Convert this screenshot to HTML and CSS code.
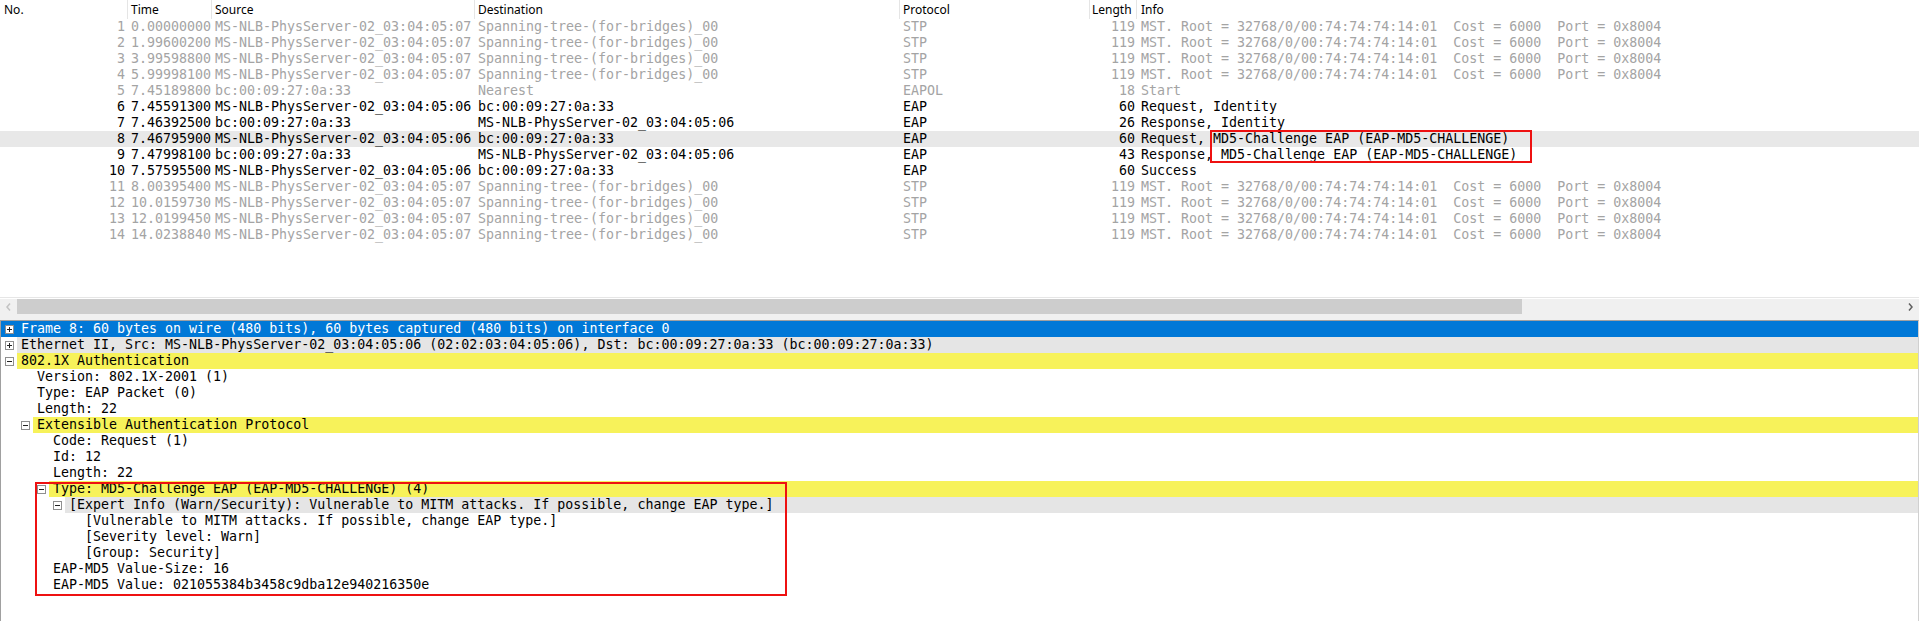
FILE: index.html
```html
<!DOCTYPE html>
<html>
<head>
<meta charset="utf-8">
<link rel="stylesheet" href="styles.css">
</head>
<body>
<div class="app">
  <div class="plist">
    <div class="cols head">
      <div class="h hno">No.</div>
      <div class="h">Time</div>
      <div class="h">Source</div>
      <div class="h">Destination</div>
      <div class="h">Protocol</div>
      <div class="h hlen">Length</div>
      <div class="h hinfo">Info</div>
    </div>
    <div class="rows">
      <div class="cols r dim"><span class="no">1</span><span class="c">0.00000000</span><span class="c">MS-NLB-PhysServer-02_03:04:05:07</span><span class="c">Spanning-tree-(for-bridges)_00</span><span class="c">STP</span><span class="len">119</span><span class="info">MST. Root = 32768/0/00:74:74:74:14:01  Cost = 6000  Port = 0x8004</span></div>
      <div class="cols r dim"><span class="no">2</span><span class="c">1.99600200</span><span class="c">MS-NLB-PhysServer-02_03:04:05:07</span><span class="c">Spanning-tree-(for-bridges)_00</span><span class="c">STP</span><span class="len">119</span><span class="info">MST. Root = 32768/0/00:74:74:74:14:01  Cost = 6000  Port = 0x8004</span></div>
      <div class="cols r dim"><span class="no">3</span><span class="c">3.99598800</span><span class="c">MS-NLB-PhysServer-02_03:04:05:07</span><span class="c">Spanning-tree-(for-bridges)_00</span><span class="c">STP</span><span class="len">119</span><span class="info">MST. Root = 32768/0/00:74:74:74:14:01  Cost = 6000  Port = 0x8004</span></div>
      <div class="cols r dim"><span class="no">4</span><span class="c">5.99998100</span><span class="c">MS-NLB-PhysServer-02_03:04:05:07</span><span class="c">Spanning-tree-(for-bridges)_00</span><span class="c">STP</span><span class="len">119</span><span class="info">MST. Root = 32768/0/00:74:74:74:14:01  Cost = 6000  Port = 0x8004</span></div>
      <div class="cols r dim"><span class="no">5</span><span class="c">7.45189800</span><span class="c">bc:00:09:27:0a:33</span><span class="c">Nearest</span><span class="c">EAPOL</span><span class="len">18</span><span class="info">Start</span></div>
      <div class="cols r"><span class="no">6</span><span class="c">7.45591300</span><span class="c">MS-NLB-PhysServer-02_03:04:05:06</span><span class="c">bc:00:09:27:0a:33</span><span class="c">EAP</span><span class="len">60</span><span class="info">Request, Identity</span></div>
      <div class="cols r"><span class="no">7</span><span class="c">7.46392500</span><span class="c">bc:00:09:27:0a:33</span><span class="c">MS-NLB-PhysServer-02_03:04:05:06</span><span class="c">EAP</span><span class="len">26</span><span class="info">Response, Identity</span></div>
      <div class="cols r sel"><span class="no">8</span><span class="c">7.46795900</span><span class="c">MS-NLB-PhysServer-02_03:04:05:06</span><span class="c">bc:00:09:27:0a:33</span><span class="c">EAP</span><span class="len">60</span><span class="info">Request, MD5-Challenge EAP (EAP-MD5-CHALLENGE)</span></div>
      <div class="cols r"><span class="no">9</span><span class="c">7.47998100</span><span class="c">bc:00:09:27:0a:33</span><span class="c">MS-NLB-PhysServer-02_03:04:05:06</span><span class="c">EAP</span><span class="len">43</span><span class="info">Response, MD5-Challenge EAP (EAP-MD5-CHALLENGE)</span></div>
      <div class="cols r"><span class="no">10</span><span class="c">7.57595500</span><span class="c">MS-NLB-PhysServer-02_03:04:05:06</span><span class="c">bc:00:09:27:0a:33</span><span class="c">EAP</span><span class="len">60</span><span class="info">Success</span></div>
      <div class="cols r dim"><span class="no">11</span><span class="c">8.00395400</span><span class="c">MS-NLB-PhysServer-02_03:04:05:07</span><span class="c">Spanning-tree-(for-bridges)_00</span><span class="c">STP</span><span class="len">119</span><span class="info">MST. Root = 32768/0/00:74:74:74:14:01  Cost = 6000  Port = 0x8004</span></div>
      <div class="cols r dim"><span class="no">12</span><span class="c">10.0159730</span><span class="c">MS-NLB-PhysServer-02_03:04:05:07</span><span class="c">Spanning-tree-(for-bridges)_00</span><span class="c">STP</span><span class="len">119</span><span class="info">MST. Root = 32768/0/00:74:74:74:14:01  Cost = 6000  Port = 0x8004</span></div>
      <div class="cols r dim"><span class="no">13</span><span class="c">12.0199450</span><span class="c">MS-NLB-PhysServer-02_03:04:05:07</span><span class="c">Spanning-tree-(for-bridges)_00</span><span class="c">STP</span><span class="len">119</span><span class="info">MST. Root = 32768/0/00:74:74:74:14:01  Cost = 6000  Port = 0x8004</span></div>
      <div class="cols r dim"><span class="no">14</span><span class="c">14.0238840</span><span class="c">MS-NLB-PhysServer-02_03:04:05:07</span><span class="c">Spanning-tree-(for-bridges)_00</span><span class="c">STP</span><span class="len">119</span><span class="info">MST. Root = 32768/0/00:74:74:74:14:01  Cost = 6000  Port = 0x8004</span></div>
    </div>
    <div class="mark mark-info"></div>
  </div>

  <div class="hscroll">
    <div class="sbtn"><svg width="5" height="8" viewBox="0 0 5 8"><path d="M4 0.5L1 4L4 7.5" fill="none" stroke="#c2c2c2" stroke-width="1.5"/></svg></div>
    <div class="track"><div class="thumb"></div></div>
    <div class="sbtn"><svg width="5" height="8" viewBox="0 0 5 8"><path d="M1 0.5L4 4L1 7.5" fill="none" stroke="#606060" stroke-width="1.5"/></svg></div>
  </div>
  <div class="splitter"></div>

  <div class="tree">
    <div class="node l0 selected"><span class="slot"><svg class="ico" width="9" height="9" viewBox="0 0 9 9"><rect x="0.5" y="0.5" width="8" height="8" fill="#fff" stroke="#8f8f8f"/><path d="M2 4.5h5M4.5 2v5" stroke="#222"/></svg></span><span class="lbl">Frame 8: 60 bytes on wire (480 bits), 60 bytes captured (480 bits) on interface 0</span></div>
    <div class="node l0"><span class="slot"><svg class="ico" width="9" height="9" viewBox="0 0 9 9"><rect x="0.5" y="0.5" width="8" height="8" fill="#fff" stroke="#8f8f8f"/><path d="M2 4.5h5M4.5 2v5" stroke="#222"/></svg></span><span class="lbl gray">Ethernet II, Src: MS-NLB-PhysServer-02_03:04:05:06 (02:02:03:04:05:06), Dst: bc:00:09:27:0a:33 (bc:00:09:27:0a:33)</span></div>
    <div class="node l0"><span class="slot"><svg class="ico" width="9" height="9" viewBox="0 0 9 9"><rect x="0.5" y="0.5" width="8" height="8" fill="#fff" stroke="#8f8f8f"/><path d="M2 4.5h5" stroke="#222"/></svg></span><span class="lbl yellow">802.1X Authentication</span></div>
    <div class="node l1"><span class="slot"></span><span class="lbl">Version: 802.1X-2001 (1)</span></div>
    <div class="node l1"><span class="slot"></span><span class="lbl">Type: EAP Packet (0)</span></div>
    <div class="node l1"><span class="slot"></span><span class="lbl">Length: 22</span></div>
    <div class="node l1"><span class="slot"><svg class="ico" width="9" height="9" viewBox="0 0 9 9"><rect x="0.5" y="0.5" width="8" height="8" fill="#fff" stroke="#8f8f8f"/><path d="M2 4.5h5" stroke="#222"/></svg></span><span class="lbl yellow">Extensible Authentication Protocol</span></div>
    <div class="node l2"><span class="slot"></span><span class="lbl">Code: Request (1)</span></div>
    <div class="node l2"><span class="slot"></span><span class="lbl">Id: 12</span></div>
    <div class="node l2"><span class="slot"></span><span class="lbl">Length: 22</span></div>
    <div class="node l2"><span class="slot"><svg class="ico" width="9" height="9" viewBox="0 0 9 9"><rect x="0.5" y="0.5" width="8" height="8" fill="#fff" stroke="#8f8f8f"/><path d="M2 4.5h5" stroke="#222"/></svg></span><span class="lbl yellow">Type: MD5-Challenge EAP (EAP-MD5-CHALLENGE) (4)</span></div>
    <div class="node l3"><span class="slot"><svg class="ico" width="9" height="9" viewBox="0 0 9 9"><rect x="0.5" y="0.5" width="8" height="8" fill="#fff" stroke="#8f8f8f"/><path d="M2 4.5h5" stroke="#222"/></svg></span><span class="lbl gray">[Expert Info (Warn/Security): Vulnerable to MITM attacks. If possible, change EAP type.]</span></div>
    <div class="node l4"><span class="slot"></span><span class="lbl">[Vulnerable to MITM attacks. If possible, change EAP type.]</span></div>
    <div class="node l4"><span class="slot"></span><span class="lbl">[Severity level: Warn]</span></div>
    <div class="node l4"><span class="slot"></span><span class="lbl">[Group: Security]</span></div>
    <div class="node l2"><span class="slot"></span><span class="lbl">EAP-MD5 Value-Size: 16</span></div>
    <div class="node l2"><span class="slot"></span><span class="lbl">EAP-MD5 Value: 021055384b3458c9dba12e940216350e</span></div>
    <div class="mark mark-tree"></div>
  </div>
</div>
</body>
</html>
```
FILE: styles.css
```css
html, body {
  margin: 0;
  padding: 0;
  background: #ffffff;
  overflow: hidden;
}

.app {
  width: 1919px;
  height: 621px;
  display: flex;
  flex-direction: column;
  font-family: "DejaVu Sans Mono", "Liberation Mono", monospace;
  font-size: 13.3px;
  color: #000;
}

.plist {
  position: relative;
  height: 297px;
  border-bottom: 1px solid #e6e6e6;
  flex: none;
}

.cols {
  display: grid;
  grid-template-columns: 128px 84px 263px 425px 190px 47px 1fr;
}

.head {
  height: 19px;
  font-family: "Noto Sans", "Open Sans", sans-serif;
  font-size: 12px;
  line-height: 19px;
}

.h {
  padding-left: 3px;
  border-right: 1px solid #e5e5e5;
  white-space: nowrap;
  overflow: hidden;
}

.hno { padding-left: 4px; }
.hlen { padding-left: 2px; }
.hinfo { padding-left: 4px; border-right: none; }

.r {
  height: 16px;
  line-height: 16px;
  white-space: pre;
}

.r > span {
  overflow: hidden;
}

.r .no { text-align: right; padding-right: 3px; }
.r .c { padding-left: 3px; }
.r .len { text-align: right; padding-right: 2px; }
.r .info { padding-left: 4px; }

.r.dim { color: #a4a4a4; }
.r.sel { background: #e8e8e8; }

.mark {
  position: absolute;
  border: 2px solid #ee1111;
  box-sizing: border-box;
  pointer-events: none;
}

.mark-info {
  left: 1210px;
  top: 130px;
  width: 322px;
  height: 33px;
}

.hscroll {
  margin-top: 1px;
  height: 15px;
  display: flex;
  background: #f0f0f0;
  flex: none;
}

.sbtn {
  width: 17px;
  display: flex;
  align-items: center;
  justify-content: center;
}

.track {
  flex: 1;
  display: flex;
}

.thumb {
  width: 1505px;
  background: #cdcdcd;
}

.splitter {
  height: 6px;
  background: #f0f0f0;
  flex: none;
}

.tree {
  position: relative;
  flex: 1;
  border-top: 1px solid #a0a0a0;
  border-left: 1px solid #a0a0a0;
  border-right: 1px solid #d0d0d0;
}

.node {
  display: flex;
  height: 16px;
  line-height: 16px;
  white-space: pre;
}

.l1 { padding-left: 16px; }
.l2 { padding-left: 32px; }
.l3 { padding-left: 48px; }
.l4 { padding-left: 64px; }

.slot {
  width: 16px;
  flex: none;
  display: flex;
  align-items: center;
  justify-content: center;
}

.ico { display: block; }

.lbl {
  flex: 1;
  padding-left: 4px;
  overflow: hidden;
}

.selected {
  background: #0078d7;
  color: #ffffff;
}

.lbl.gray { background: #e5e5e5; }
.lbl.yellow { background: #f7f25a; }

.mark-tree {
  left: 34px;
  top: 161px;
  width: 752px;
  height: 114px;
}
```
